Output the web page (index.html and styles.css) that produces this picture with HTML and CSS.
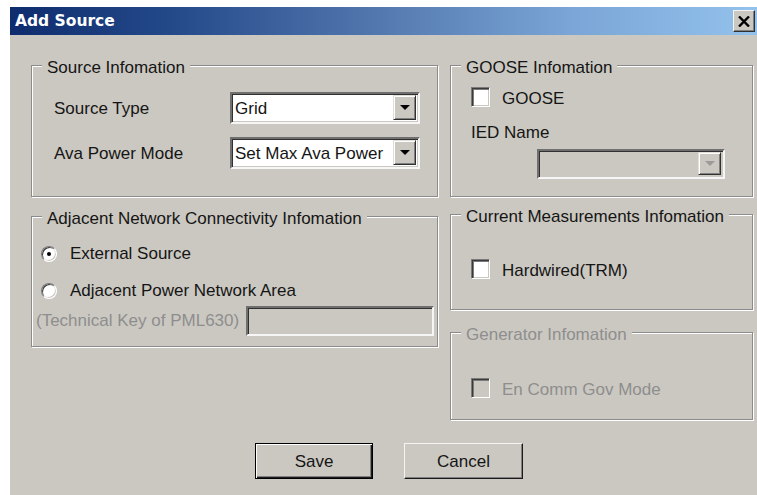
FILE: index.html
```html
<!DOCTYPE html>
<html>
<head>
<meta charset="utf-8">
<title>Add Source</title>
<link rel="stylesheet" href="styles.css">
</head>
<body>
<div class="window">
  <div class="titlebar">
    <span class="title">Add Source</span>
    <span class="close-btn">
      <svg width="12" height="11" viewBox="0 0 12 11"><path d="M1 0.5 L11 10.5 M11 0.5 L1 10.5" stroke="#000" stroke-width="2.4" fill="none"/></svg>
    </span>
  </div>

  <div class="content">
    <div class="columns">
      <div class="col col-left">
        <div class="group g-source">
          <span class="legend">Source Infomation</span>
          <div class="field-grid">
            <span class="field-label">Source Type</span>
            <div class="combo"><span class="combo-text">Grid</span><span class="drop"><i class="arrow"></i></span></div>
            <span class="field-label">Ava Power Mode</span>
            <div class="combo"><span class="combo-text">Set Max Ava Power</span><span class="drop"><i class="arrow"></i></span></div>
          </div>
        </div>

        <div class="group g-adjacent">
          <span class="legend">Adjacent Network Connectivity Infomation</span>
          <label class="radio-row"><span class="radio checked"></span>External Source</label>
          <label class="radio-row second"><span class="radio"></span>Adjacent Power Network Area</label>
          <div class="tech-row">
            <span class="muted">(Technical Key of PML630)</span>
            <span class="textbox disabled"></span>
          </div>
        </div>
      </div>

      <div class="col col-right">
        <div class="group g-goose">
          <span class="legend">GOOSE Infomation</span>
          <label class="check-row"><span class="checkbox"></span><span class="check-text">GOOSE</span></label>
          <div class="ied-label">IED Name</div>
          <div class="combo small disabled"><span class="combo-text"></span><span class="drop"><i class="arrow"></i></span></div>
        </div>

        <div class="group g-current">
          <span class="legend">Current Measurements Infomation</span>
          <label class="check-row"><span class="checkbox"></span><span class="check-text">Hardwired(TRM)</span></label>
        </div>

        <div class="group g-generator">
          <span class="legend muted">Generator Infomation</span>
          <label class="check-row muted"><span class="checkbox disabled"></span><span class="check-text">En Comm Gov Mode</span></label>
        </div>
      </div>
    </div>

    <div class="actions">
      <span class="btn default">Save</span>
      <span class="btn">Cancel</span>
    </div>
  </div>
</div>
</body>
</html>
```

FILE: styles.css
```css
* {
  box-sizing: border-box;
}

html,
body {
  margin: 0;
  padding: 0;
  background: #ffffff;
}

body {
  font-family: "Liberation Sans", Arial, sans-serif;
  font-size: 17px;
  line-height: 20px;
  color: #151515;
}

/* dialog frame */
.window {
  margin: 7px 0 0 10px;
  width: 747px;
  height: 488px;
  background: #cbc8c1;
  display: flex;
  flex-direction: column;
}

.titlebar {
  flex: none;
  height: 28px;
  display: flex;
  align-items: center;
  padding: 0 2px 0 5px;
  background: linear-gradient(to right, #0e2c6e 0%, #244a8a 22%, #5479b0 50%, #7aa5d6 75%, #93c2ec 100%);
}

.title {
  flex: 1;
  font-family: "DejaVu Sans", sans-serif;
  font-weight: bold;
  font-size: 15.5px;
  line-height: 20px;
  color: #ffffff;
}

.close-btn {
  width: 22px;
  height: 22px;
  display: flex;
  align-items: center;
  justify-content: center;
  background: #cbc8c1;
  border: 1px solid;
  border-color: #f4f4f4 #303030 #303030 #f4f4f4;
  box-shadow: inset -1px -1px 0 #808080;
}

/* body of the dialog */
.content {
  flex: 1;
  padding: 30px 4px 0 21px;
}

.columns {
  display: flex;
  align-items: flex-start;
  gap: 12px;
}

.col {
  display: flex;
  flex-direction: column;
}

.col-left {
  width: 407px;
  gap: 19px;
}

.col-right {
  width: 303px;
}

/* etched group box */
.group {
  position: relative;
  border: 1px solid #8b8b8b;
  box-shadow: inset 1px 1px 0 #ffffff, 1px 1px 0 #ffffff;
}

.legend {
  position: absolute;
  top: -8px;
  left: 10px;
  padding: 0 5px;
  background: #cbc8c1;
  white-space: nowrap;
}

.g-source {
  height: 132px;
  padding: 26px 0 0 22px;
}

.g-adjacent {
  height: 131px;
  padding: 27px 3px 0 4px;
}

.g-goose {
  height: 132px;
  padding: 21px 0 0 20px;
}

.g-current {
  height: 96px;
  margin-top: 17px;
  padding: 44px 0 0 20px;
}

.g-generator {
  height: 88px;
  margin-top: 22px;
  padding: 45px 0 0 20px;
}

.muted {
  color: #8e8e8e;
}

/* label / combo pairs */
.field-grid {
  display: grid;
  grid-template-columns: 176px 190px;
  row-gap: 13px;
  align-items: center;
}

.field-label {
  padding-top: 1px;
}

.combo {
  height: 32px;
  display: flex;
  align-items: center;
  background: #ffffff;
  border: 2px solid;
  border-color: #6f6f6f #f6f6f6 #f6f6f6 #6f6f6f;
  box-shadow: inset 1px 1px 0 #303030, inset -1px -1px 0 #cbc8c1;
}

.combo-text {
  flex: 1;
  padding: 1px 0 0 3px;
  white-space: nowrap;
  overflow: hidden;
}

.drop {
  flex: none;
  width: 23px;
  align-self: stretch;
  margin: 1px 2px 2px 0;
  display: flex;
  align-items: center;
  justify-content: center;
  background: #cbc8c1;
  border: 1px solid;
  border-color: #e2dfd8 #303030 #303030 #e2dfd8;
  box-shadow: inset 1px 1px 0 #ffffff, inset -1px -1px 0 #808080;
}

.arrow {
  width: 0;
  height: 0;
  border-left: 5px solid transparent;
  border-right: 5px solid transparent;
  border-top: 5px solid #000000;
}

.combo.small {
  width: 188px;
  height: 30px;
  margin: 6px 0 0 66px;
}

.combo.disabled {
  background: #cbc8c1;
}

.combo.disabled .arrow {
  border-top-color: #9a9a9a;
}

/* check boxes */
.check-row {
  display: flex;
  align-items: center;
  gap: 12px;
  height: 20px;
}

.check-text {
  padding-top: 3px;
}

.checkbox {
  flex: none;
  width: 19px;
  height: 20px;
  background: #ffffff;
  border: 1px solid;
  border-color: #7a7a7a #ffffff #ffffff #7a7a7a;
  box-shadow: inset 1px 1px 0 #3a3a3a, inset 2px 2px 0 #7a7a7a, inset -1px -1px 0 #cbc8c1;
}

.checkbox.disabled {
  background: #cbc8c1;
}

.ied-label {
  margin-top: 16px;
}

/* radio buttons */
.radio-row {
  display: flex;
  align-items: center;
  gap: 13px;
  height: 20px;
  margin-left: 5px;
}

.radio-row.second {
  margin-top: 17px;
}

.radio {
  position: relative;
  flex: none;
  width: 16px;
  height: 16px;
  border-radius: 50%;
  background: #ffffff;
  border: 1px solid;
  border-color: #7a7a7a #ffffff #ffffff #7a7a7a;
  box-shadow: inset 1px 1px 0 #3a3a3a, inset -1px -1px 0 #cbc8c1;
}

.radio.checked::after {
  content: "";
  position: absolute;
  left: 5px;
  top: 5px;
  width: 4px;
  height: 4px;
  border-radius: 50%;
  background: #000000;
}

.tech-row {
  display: flex;
  align-items: center;
  margin-top: 5px;
}

.textbox {
  margin-left: auto;
  width: 188px;
  height: 30px;
  border: 2px solid;
  border-color: #6f6f6f #f6f6f6 #f6f6f6 #6f6f6f;
  box-shadow: inset 1px 1px 0 #303030, inset -1px -1px 0 #cbc8c1;
}

.textbox.disabled {
  background: #cbc8c1;
}

/* dialog buttons */
.actions {
  display: flex;
  gap: 31px;
  margin-top: 23px;
  padding-left: 224px;
}

.btn {
  width: 118px;
  height: 36px;
  display: flex;
  align-items: center;
  justify-content: center;
  padding-top: 1px;
  background: #cbc8c1;
  border: 1px solid;
  border-color: #f4f4f4 #1a1a1a #1a1a1a #f4f4f4;
  box-shadow: inset -1px -1px 0 #808080;
}

.btn + .btn {
  width: 119px;
}

.btn.default {
  border: 1px solid #000000;
  box-shadow: inset 1px 1px 0 #ffffff, inset -1px -1px 0 #1a1a1a, inset -2px -2px 0 #808080;
}
```
